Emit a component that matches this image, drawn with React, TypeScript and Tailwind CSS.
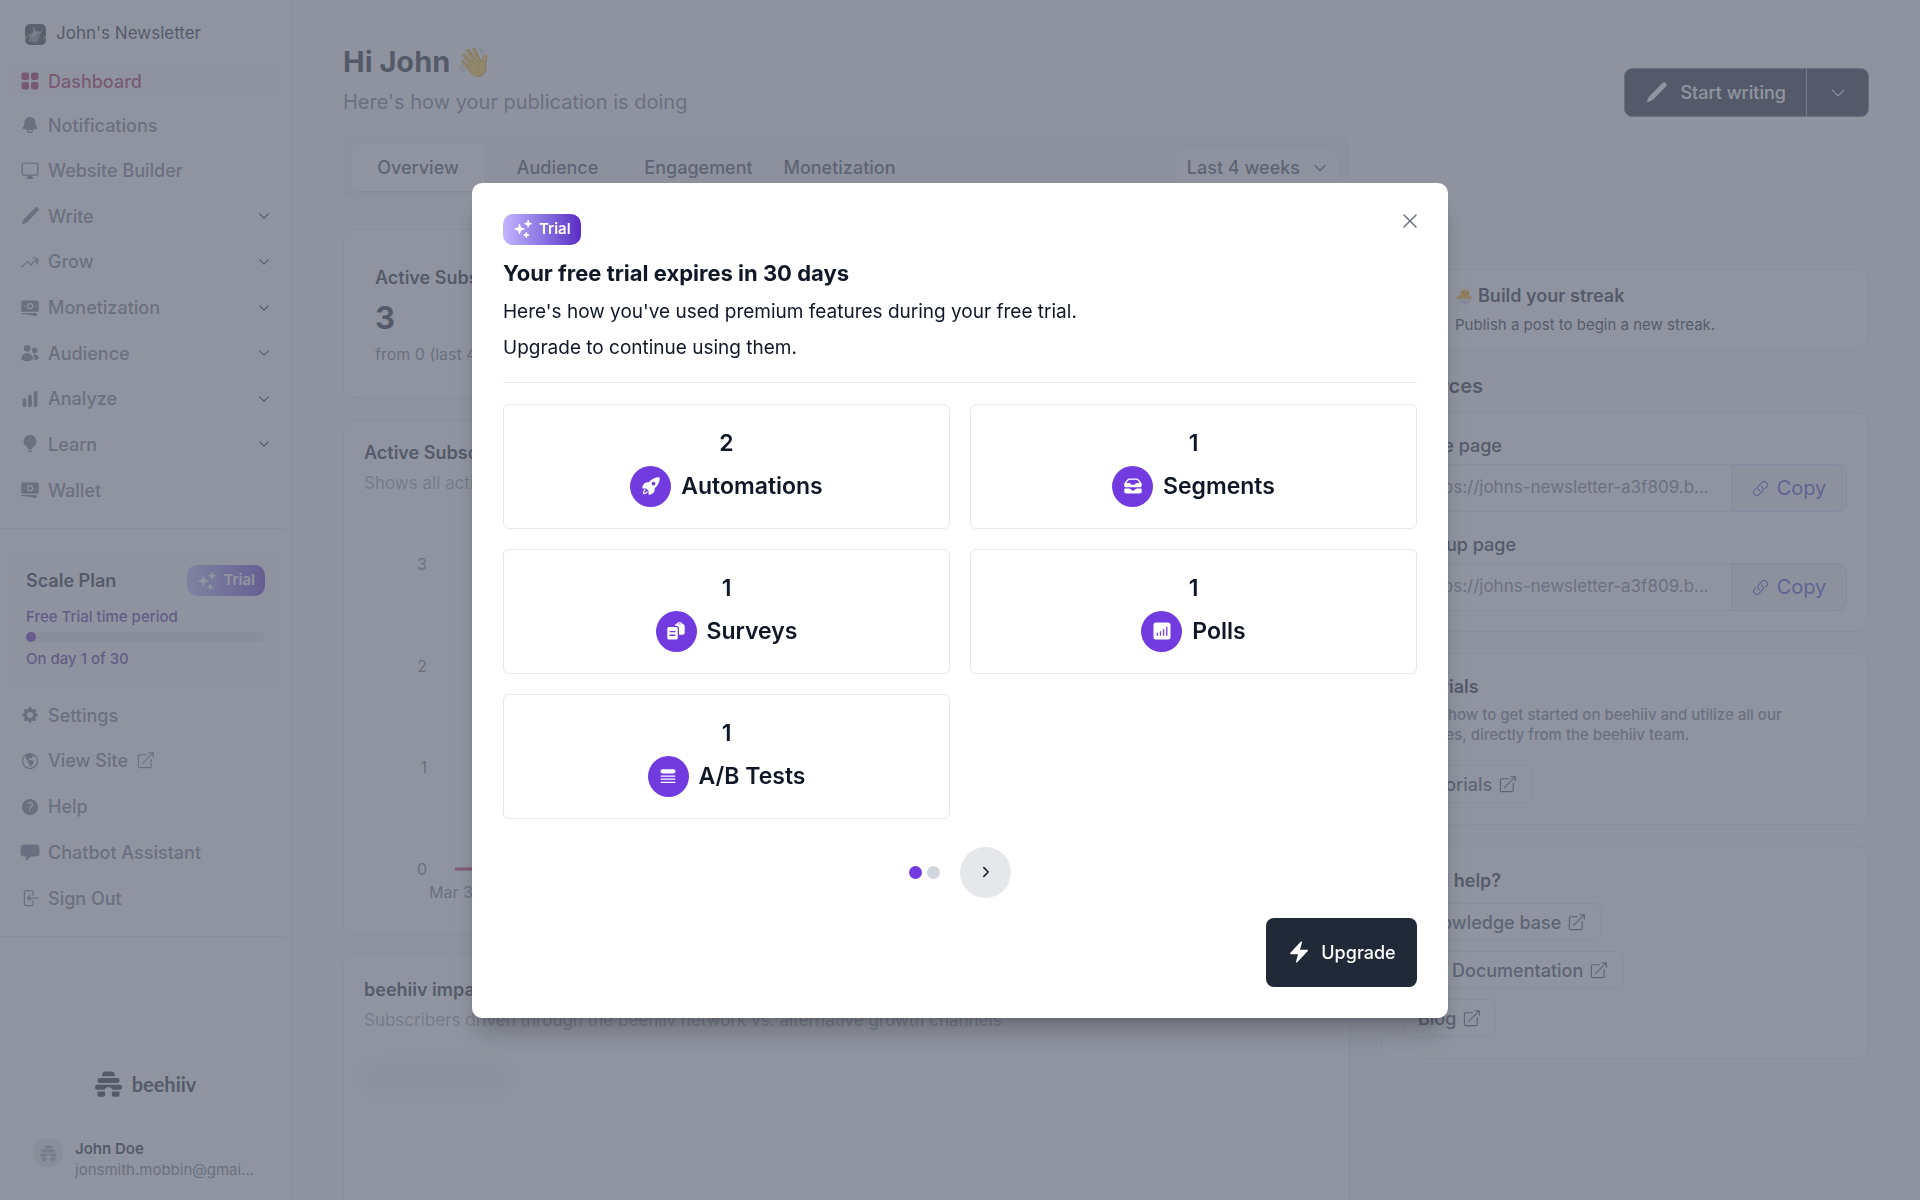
import type { ComponentType, ReactNode } from 'react';
import {
  HiBanknotes,
  HiBell,
  HiBolt,
  HiChartBar,
  HiGlobeAmericas,
  HiInboxStack,
  HiOutlineArrowLeftOnRectangle,
  HiOutlineArrowTrendingUp,
  HiOutlineChevronDown,
  HiOutlineChevronRight,
  HiOutlineLink,
  HiOutlineXMark,
  HiQuestionMarkCircle,
  HiQueueList,
  HiRocketLaunch,
  HiUsers,
} from 'react-icons/hi2';
import { HiCog } from 'react-icons/hi';

type IconProps = { className?: string };
type Icon = ComponentType<IconProps>;

function SquaresIcon({ className }: IconProps) {
  return (
    <svg viewBox="0 0 20 20" fill="currentColor" className={className} aria-hidden="true">
      <rect x="1.5" y="1.5" width="7.5" height="7.5" rx="2" />
      <rect x="11" y="1.5" width="7.5" height="7.5" rx="2" />
      <rect x="1.5" y="11" width="7.5" height="7.5" rx="2" />
      <rect x="11" y="11" width="7.5" height="7.5" rx="2" />
    </svg>
  );
}

function MonitorIcon({ className }: IconProps) {
  return (
    <svg viewBox="0 0 20 20" fill="none" stroke="currentColor" strokeWidth="1.3" className={className} aria-hidden="true">
      <rect x="2.2" y="2.2" width="15.6" height="12" rx="1.8" />
      <path d="M7.8 14.2h4.4l.6 2.6.8.7v.4H6.400v-.4l.8-.7.6-2.600Z" fill="currentColor" stroke="none" />
    </svg>
  );
}

function PenIcon({ className }: IconProps) {
  return (
    <svg viewBox="0 0 20 20" fill="currentColor" className={className} aria-hidden="true">
      <path d="M18.2 1.8a2.1 2.1 0 0 0-3 0L4.6 12.300c-.9.9-1.600 2-2 3.200l-.8 2.200c-.1.400.2.700.6.600l2.200-.8c1.200-.4 2.300-1.100 3.200-2L18.200 4.800a2.100 2.100 0 0 0 0-3Z" />
    </svg>
  );
}

function BulbIcon({ className }: IconProps) {
  return (
    <svg viewBox="0 0 20 20" fill="currentColor" className={className} aria-hidden="true">
      <path d="M10 1a6.3 6.3 0 0 0-3.6 11.500c.7.500 1.200 1.200 1.300 2 .1.400.4.700.8.700h3c.4 0 .7-.3.8-.7.1-.8.6-1.500 1.300-2A6.300 6.300 0 0 0 10 1Z" />
      <path d="M8 16.300h4c0 1.200-.9 2.200-2 2.200s-2-1-2-2.200Z" />
    </svg>
  );
}

function ChatIcon({ className }: IconProps) {
  return (
    <svg viewBox="0 0 20 20" fill="currentColor" className={className} aria-hidden="true">
      <path d="M4 2.500h12a3.500 3.500 0 0 1 3.500 3.500v5a3.500 3.500 0 0 1-3.500 3.500h-4.800l-4.600 3.900c-.5.400-1.100.1-1-.5l.3-3.400H4A3.500 3.500 0 0 1 .5 11V6A3.500 3.500 0 0 1 4 2.500Z" />
    </svg>
  );
}

function ExternalIcon({ className }: IconProps) {
  return (
    <svg
      viewBox="0 0 20 20"
      fill="none"
      stroke="currentColor"
      strokeWidth="1.2"
      strokeLinecap="round"
      strokeLinejoin="round"
      className={className}
      aria-hidden="true"
    >
      <path d="M11 4H3.800C3 4 2.500 4.500 2.500 5.300v11c0 .7.5 1.200 1.300 1.200h11c.7 0 1.200-.5 1.200-1.200V9M7 13 18 2M13.500 1.800H18.200v4.700" />
    </svg>
  );
}

function SparklesIcon({ className }: IconProps) {
  return (
    <svg viewBox="0 0 20 20" fill="currentColor" stroke="currentColor" strokeLinejoin="round" className={className} aria-hidden="true">
      <path d="M6.500 5.200c.6 3.200 1.600 4.200 4.800 4.800-3.200.6-4.200 1.600-4.800 4.800C5.900 11.600 4.900 10.600 1.700 10c3.200-.6 4.200-1.600 4.800-4.800Z" />
      <path d="M15.200 1.200c.5 2.300 1.200 3 3.500 3.500-2.300.5-3 1.200-3.500 3.500-.5-2.300-1.200-3-3.500-3.500 2.300-.5 3-1.200 3.500-3.500Z" />
      <path d="M13.300 13.200c.4 1.900.9 2.400 2.800 2.800-1.900.4-2.400.9-2.800 2.800-.4-1.900-.9-2.400-2.800-2.800 1.900-.4 2.400-.9 2.800-2.800Z" />
    </svg>
  );
}

function SurveyIcon({ className }: IconProps) {
  return (
    <svg viewBox="0 0 20 20" fill="currentColor" className={className} aria-hidden="true">
      <path
        fillRule="evenodd"
        d="M2.800 6h7.400c.9 0 1.500.6 1.500 1.500v9.500c0 .9-.6 1.500-1.500 1.500H2.800c-.9 0-1.500-.6-1.500-1.500V7.500c0-.9.6-1.500 1.500-1.500Zm.8 4v1.300h5.800V10H3.600Zm0 3.600v1.300h5.800v-1.300H3.600Z"
      />
      <path
        fillRule="evenodd"
        d="M8.800 4.800c0-.9.700-1.600 1.700-1.700.3-1 1.100-1.800 2.200-1.800h1.600c1.100 0 1.900.8 2.200 1.800 1.200.1 2.200 1 2.200 2.200v6.500a2 2 0 0 1-2 2h-3.700V7.300c0-1.400-1.100-2.500-2.500-2.500H8.800Zm3.300-1.500h2.900c-.1-.5-.5-.8-.9-.8h-1.100c-.4 0-.8.3-.9.800Z"
      />
    </svg>
  );
}

function PollIcon({ className }: IconProps) {
  return (
    <svg viewBox="0 0 20 20" fill="currentColor" className={className} aria-hidden="true">
      <path
        fillRule="evenodd"
        d="M4 1.500h12A2.500 2.500 0 0 1 18.500 4v12a2.500 2.500 0 0 1-2.500 2.500H4A2.500 2.500 0 0 1 1.500 16V4A2.500 2.500 0 0 1 4 1.500Zm.6 10.300v3h1.300v-3H4.600Zm3.200-1.600v4.600h1.300v-4.600H7.800Zm3.100-2v6.600h1.300V8.200h-1.300Zm3.200-2.400v9h1.300v-9h-1.300Z"
      />
    </svg>
  );
}

function HiveIcon({ className }: IconProps) {
  return (
    <svg viewBox="0 0 27 26" fill="currentColor" className={className} aria-hidden="true">
      <path d="M11 .5h5a4 4 0 0 1 4 4v.8H7v-.8a4 4 0 0 1 4-4Z" />
      <rect x="2.5" y="7" width="22" height="5" rx="2" />
      <path d="M2.500 13.700h22a2.500 2.500 0 0 1 0 5h-7.200a4 4 0 0 0-7.600 0H2.500a2.500 2.500 0 0 1 0-5Z" />
      <path d="M2.500 20.500h7.700v3.300a2 2 0 0 1-2 2H4.500a2 2 0 0 1-2-2v-3.300ZM16.800 20.500h7.700v3.300a2 2 0 0 1-2 2h-3.700a2 2 0 0 1-2-2v-3.300Z" />
    </svg>
  );
}

function NewsletterAvatar() {
  return (
    <svg viewBox="0 0 21 21" className="size-[21px]" aria-hidden="true">
      <rect width="21" height="21" rx="5" fill="#2f3238" />
      <path d="M2 12c2-2 4-3 6-4l1-6 2 5 3 1 4-3-3 6-2 6-3 2-4-2-3 1 2-4Z" fill="#7d828c" />
      <path d="m8 3 1 5-3 6 5-3 3-4-4 1Z" fill="#b3b7be" />
      <path d="M0 12h1.500v3H0zM19.500 12H21v3h-1.500z" fill="#c9b84a" />
    </svg>
  );
}

function TrialBadge() {
  return (
    <span className="inline-flex h-[31px] items-center gap-1.5 rounded-[10px] bg-linear-to-r from-[#c4b5fd] to-[#5b28c4] px-2.5 text-[15px] font-semibold text-white">
      <SparklesIcon className="size-5" />
      Trial
    </span>
  );
}

type NavItemProps = { icon: Icon; label: string; active?: boolean; expandable?: boolean; external?: boolean };

const mainNav: NavItemProps[] = [
  { icon: HiBell, label: 'Notifications' },
  { icon: MonitorIcon, label: 'Website Builder' },
  { icon: PenIcon, label: 'Write', expandable: true },
  { icon: HiOutlineArrowTrendingUp, label: 'Grow', expandable: true },
  { icon: HiBanknotes, label: 'Monetization', expandable: true },
  { icon: HiUsers, label: 'Audience', expandable: true },
  { icon: HiChartBar, label: 'Analyze', expandable: true },
  { icon: BulbIcon, label: 'Learn', expandable: true },
  { icon: HiBanknotes, label: 'Wallet' },
];

const secondaryNav: NavItemProps[] = [
  { icon: HiCog, label: 'Settings' },
  { icon: HiGlobeAmericas, label: 'View Site', external: true },
  { icon: HiQuestionMarkCircle, label: 'Help' },
  { icon: ChatIcon, label: 'Chatbot Assistant' },
  { icon: HiOutlineArrowLeftOnRectangle, label: 'Sign Out' },
];

function NavItem({ icon: ItemIcon, label, active, expandable, external }: NavItemProps) {
  return (
    <a
      href="#"
      className={`flex h-[34px] items-center gap-2 rounded-md px-2 text-[18px] font-medium ${
        active ? 'bg-gray-50 text-[#9d174d]' : 'text-[#6b7280]'
      }`}
    >
      <ItemIcon className="size-5" />
      {label}
      {external && <ExternalIcon className="size-[19px]" />}
      {expandable && <HiOutlineChevronDown className="ml-auto size-3.5 stroke-2 text-gray-900" />}
    </a>
  );
}

function Sidebar() {
  return (
    <aside className="flex w-[292px] shrink-0 flex-col border-r border-gray-200 bg-white">
      <button type="button" className="flex h-16 items-center gap-2.5 pt-1 pl-[25px] text-[17px] text-gray-900">
        <NewsletterAvatar />
        John's Newsletter
      </button>

      <nav className="flex flex-col px-3">
        <NavItem icon={SquaresIcon} label="Dashboard" active />
        <div className="mt-2.5 flex h-[399px] flex-col justify-between">
          {mainNav.map((item) => (
            <NavItem key={item.label} {...item} />
          ))}
        </div>
      </nav>

      <div className="mt-[21px] mr-1 border-t border-gray-200" />

      <section className="mx-3 mt-[23px] flex h-[138px] flex-col rounded-md bg-gray-50 px-3.5 pt-[13px]">
        <div className="flex items-center justify-between">
          <h2 className="text-[18px] font-semibold text-gray-900">Scale Plan</h2>
          <TrialBadge />
        </div>
        <p className="mt-2.5 text-[15px] leading-[22px] font-medium text-[#4c1d95]">Free Trial time period</p>
        <div className="mt-1 h-2.5 rounded-full bg-gray-200">
          <div className="size-2.5 rounded-full bg-[#5b21b6]" />
        </div>
        <p className="mt-1.5 text-[15px] leading-[22px] font-medium text-[#4c1d95]">On day 1 of 30</p>
      </section>

      <nav className="mt-2 flex h-[217px] flex-col justify-between px-3">
        {secondaryNav.map((item) => (
          <NavItem key={item.label} {...item} />
        ))}
      </nav>

      <div className="mt-[21px] mr-1 border-t border-gray-200" />

      <div className="mt-auto flex items-center justify-center gap-2.5 text-gray-900">
        <HiveIcon className="h-[26px] w-[27px]" />
        <span className="font-[Lato,sans-serif] text-[20px] leading-[26px] font-bold">beehiiv</span>
      </div>

      <div className="mt-[41px] mb-5 flex items-start gap-3 pl-[33px]">
        <span className="flex size-[30px] items-center justify-center rounded-full bg-gray-200 text-gray-400">
          <HiveIcon className="h-4 w-[17px]" />
        </span>
        <div className="text-[15px] leading-[21px]">
          <p className="font-semibold text-gray-900">John Doe</p>
          <p className="text-gray-500">jonsmith.mobbin@gmai...</p>
        </div>
      </div>
    </aside>
  );
}

function Card({ className, children }: { className?: string; children?: ReactNode }) {
  return <section className={`rounded-[10px] border border-gray-200 bg-white ${className ?? ''}`}>{children}</section>;
}

function StatsColumn() {
  return (
    <div className="flex min-w-0 flex-1 flex-col">
      <div className="flex h-[61px] shrink-0 items-center rounded-md bg-gray-100 px-2 text-[18px] font-medium text-gray-700">
        <div role="tablist" className="flex gap-1">
          <button type="button" role="tab" aria-selected="true" className="h-[47px] w-[134px] rounded-lg bg-white shadow-sm">
            Overview
          </button>
          <button type="button" role="tab" aria-selected="false" className="w-[137px]">Audience</button>
          <button type="button" role="tab" aria-selected="false" className="w-[137px]">Engagement</button>
          <button type="button" role="tab" aria-selected="false" className="w-[137px]">Monetization</button>
        </div>
        <button type="button" className="mr-1 ml-auto flex h-9 items-center gap-3 rounded-md bg-gray-50 px-2.5">
          Last 4 weeks
          <HiOutlineChevronDown className="size-4 stroke-2" />
        </button>
      </div>

      <Card className="mt-[31px] h-[169px] shrink-0 px-[31px] pt-9">
        <h2 className="text-[18px] leading-6 font-semibold text-gray-900">Active Subscribers</h2>
        <p className="mt-2 text-[31px] leading-10 font-bold text-gray-900">3</p>
        <p className="mt-1.5 text-[16px] leading-5 text-gray-500">from 0 (last 4 weeks)</p>
      </Card>

      <Card className="mt-[22px] h-[515px] shrink-0 px-5 pt-5">
        <h2 className="text-[18px] leading-6 font-semibold text-gray-900">Active Subscribers</h2>
        <p className="mt-1.5 text-[17px] leading-6 text-gray-400">Shows all active subscribers over time</p>
        <svg viewBox="0 0 940 360" className="mt-14 h-[360px] w-[940px] text-[16px]" aria-hidden="true">
          <g fill="#6b7280" textAnchor="end">
            <text x="63" y="19">3</text>
            <text x="63" y="121">2</text>
            <text x="63" y="222">1</text>
            <text x="63" y="324">0</text>
          </g>
          <text x="65" y="347" fill="#6b7280">Mar 30</text>
          <path d="M91 318H930" stroke="#be185d" strokeWidth="3" />
        </svg>
      </Card>

      <Card className="mt-5 h-[420px] shrink-0 px-5 pt-[22px]">
        <h2 className="text-[18px] leading-6 font-semibold text-gray-900">beehiiv impact</h2>
        <p className="mt-1.5 text-[17px] leading-6 text-gray-400">
          Subscribers driven through the beehiiv network vs. alternative growth channels
        </p>
        <div className="mt-9 h-5 w-36 bg-gray-200 blur-md" />
      </Card>
    </div>
  );
}

function CopyField({ id, label }: { id: string; label: string }) {
  return (
    <div>
      <label htmlFor={id} className="block text-[18px] leading-6 font-medium text-gray-900">{label}</label>
      <div className="mt-1.5 flex h-12">
        <input
          id={id}
          readOnly
          defaultValue="https://johns-newsletter-a3f809.b..."
          className="w-0 flex-1 rounded-l-[10px] border border-r-0 border-gray-200 bg-white pl-[18px] text-[17px] text-gray-500"
        />
        <button
          type="button"
          className="flex w-[116px] items-center justify-center gap-2 rounded-r-[10px] border border-indigo-200 bg-gray-100 text-[20px] text-[#4338ca]"
        >
          <HiOutlineLink className="size-[17px]" />
          Copy
        </button>
      </div>
    </div>
  );
}

function ExternalButton({ children }: { children: ReactNode }) {
  return (
    <a
      href="#"
      className="flex h-[38px] w-fit items-center gap-1.5 rounded-md border border-gray-200 px-3.5 text-[18px] font-medium text-gray-700"
    >
      {children}
      <ExternalIcon className="size-[19px]" />
    </a>
  );
}

function ResourcesColumn() {
  return (
    <div className="flex w-[488px] shrink-0 flex-col pt-[132px]">
      <Card className="h-[81px] pt-3 pl-[73px]">
        <h2 className="text-[18px] leading-7 font-semibold text-gray-900">
          <span className="mr-1 text-[15px]">🐣</span>
          Build your streak
        </h2>
        <p className="mt-0.5 text-[15px] leading-6 text-gray-900">Publish a post to begin a new streak.</p>
      </Card>

      <h2 className="mt-[22px] text-[20px] leading-7 font-semibold text-gray-900">Resources</h2>

      <Card className="mt-3 flex h-[220px] flex-col gap-[21px] px-[21px] pt-[21px]">
        <CopyField id="home-page" label="Home page" />
        <CopyField id="signup-page" label="Sign up page" />
      </Card>

      <Card className="mt-[21px] h-[172px] px-[21px] pt-[21px]">
        <h3 className="text-[18px] leading-6 font-semibold text-gray-900">Tutorials</h3>
        <p className="mt-1.5 mb-5 text-[15px] leading-5 font-medium text-gray-500">
          Learn how to get started on beehiiv and utilize all our
          <br />
          features, directly from the beehiiv team.
        </p>
        <ExternalButton>Tutorials</ExternalButton>
      </Card>

      <Card className="mt-[21px] flex h-[213px] flex-col gap-2.5 px-[21px] pt-[22px]">
        <h3 className="text-[18px] leading-6 font-semibold text-gray-900">Need help?</h3>
        <ExternalButton>Knowledge base</ExternalButton>
        <ExternalButton>API Documentation</ExternalButton>
        <ExternalButton>Blog</ExternalButton>
      </Card>
    </div>
  );
}

function Dashboard() {
  return (
    <main className="flex min-w-0 flex-1 flex-col overflow-hidden bg-gray-50 px-[51px] pt-10">
      <header className="flex items-start justify-between">
        <div>
          <h1 className="flex items-center gap-1.5 text-[29px] leading-11 font-bold text-gray-900">
            Hi John <span className="font-normal">👋</span>
          </h1>
          <p className="mt-1 text-[20px] leading-7 text-gray-500">Here's how your publication is doing</p>
        </div>
        <div className="mt-7 flex h-[49px] rounded-lg border border-gray-500 bg-gray-900 text-[18px] font-medium text-white">
          <button type="button" className="flex items-center gap-3 border-r border-gray-400 px-5">
            <PenIcon className="size-[23px]" />
            Start writing
          </button>
          <button type="button" aria-label="More writing options" className="flex w-[61px] items-center justify-center">
            <HiOutlineChevronDown className="size-[18px]" />
          </button>
        </div>
      </header>

      <div className="mt-5 flex min-h-0 gap-[31px]">
        <StatsColumn />
        <ResourcesColumn />
      </div>
    </main>
  );
}

const usage: { icon: Icon; label: string; count: number }[] = [
  { icon: HiRocketLaunch, label: 'Automations', count: 2 },
  { icon: HiInboxStack, label: 'Segments', count: 1 },
  { icon: SurveyIcon, label: 'Surveys', count: 1 },
  { icon: PollIcon, label: 'Polls', count: 1 },
  { icon: HiQueueList, label: 'A/B Tests', count: 1 },
];

function TrialDialog() {
  return (
    <div className="fixed inset-0 flex items-center justify-center bg-[#6b7080]/75">
      <div
        role="dialog"
        aria-modal="true"
        aria-labelledby="trial-title"
        className="relative flex w-[976px] max-w-full flex-col rounded-[10px] bg-white p-[31px] text-gray-900 shadow-xl shadow-black/20"
      >
        <button type="button" aria-label="Close" className="absolute top-[26px] right-[26px] text-gray-500">
          <HiOutlineXMark className="size-6" />
        </button>

        <div className="flex">
          <TrialBadge />
        </div>
        <h2 id="trial-title" className="mt-2.5 text-[22px] leading-9 font-bold">Your free trial expires in 30 days</h2>
        <p className="mt-[3px] text-[19px] leading-9">
          Here's how you've used premium features during your free trial.
          <br />
          Upgrade to continue using them.
        </p>

        <hr className="mt-4 border-gray-200" />

        <ul className="mt-[21px] grid grid-cols-2 gap-5">
          {usage.map(({ icon: UsageIcon, label, count }) => (
            <li key={label} className="flex h-[125px] flex-col items-center rounded-md border border-gray-200 pt-6 text-[23px] font-semibold">
              <span className="leading-7">{count}</span>
              <span className="mt-[9px] flex items-center gap-2.5">
                <span className="flex size-[41px] items-center justify-center rounded-full bg-[#713be0] text-white">
                  <UsageIcon className="size-5" />
                </span>
                {label}
              </span>
            </li>
          ))}
        </ul>

        <div className="mt-7 flex items-center justify-center">
          <span className="size-[13px] rounded-full bg-[#713be0]" />
          <span className="ml-[5px] size-[13px] rounded-full bg-gray-300" />
          <button type="button" aria-label="Next" className="ml-5 flex size-[51px] items-center justify-center rounded-full bg-gray-200">
            <HiOutlineChevronRight className="size-3.5 stroke-[2.5]" />
          </button>
        </div>

        <button
          type="button"
          className="mt-5 flex h-[69px] w-[151px] items-center justify-center gap-2.5 self-end rounded-lg bg-[#1f2937] text-[18px] font-medium text-white"
        >
          <HiBolt className="size-6" />
          Upgrade
        </button>
      </div>
    </div>
  );
}

export default function App() {
  return (
    <div className="flex h-screen overflow-hidden font-[Inter,sans-serif]">
      <Sidebar />
      <Dashboard />
      <TrialDialog />
    </div>
  );
}
